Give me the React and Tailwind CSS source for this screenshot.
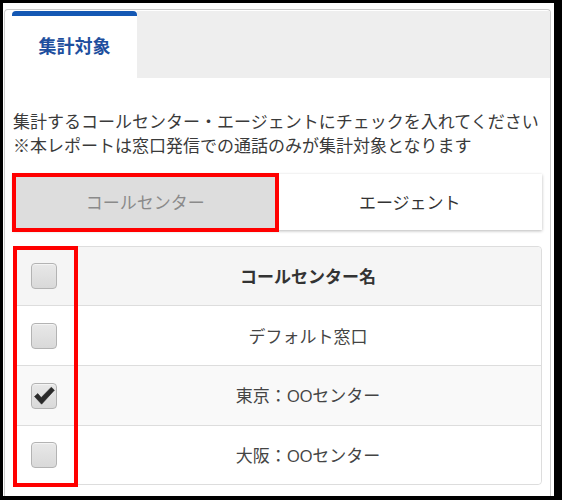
import { useState } from 'react'

const rows = [
  { id: 'default', name: ['デフォルト窓口'], checked: false },
  { id: 'tokyo', name: ['東京：', 'OO', 'センター'], checked: true },
  { id: 'osaka', name: ['大阪：', 'OO', 'センター'], checked: false },
]

function CheckBox({ checked }) {
  return (
    <div className="relative w-[26px] h-[26px] rounded-[4px] border border-[#b3b3b3] bg-linear-to-b from-[#e8e8e8] to-[#d9d9d9] shadow-[inset_0_1px_1px_rgba(255,255,255,0.6)]">
      {checked && (
        <svg className="absolute -left-[1px] -top-[1px]" width="26" height="26" viewBox="0 0 26 26">
          <path d="M3.5 13.5 L6.8 10.6 L10.2 14.6 L20.3 4.2 L23.4 7.2 L10.6 21.2 Z" fill="#2a2a2a" stroke="#2a2a2a" strokeWidth="0.6" strokeLinejoin="round" />
        </svg>
      )}
    </div>
  )
}

function Name({ parts }) {
  return (
    <span>
      {parts.map((p, i) =>
        p === 'OO' ? (
          <span key={i} className="font-['Open_Sans',sans-serif] tracking-[-0.5px]">{p}</span>
        ) : (
          <span key={i}>{p}</span>
        )
      )}
    </span>
  )
}

export default function App() {
  const [mode] = useState('center')

  return (
    <div className="w-[562px] h-[500px] bg-black pt-[3px] pl-[3px] pr-[8px] pb-[4px] font-['Noto_Sans_CJK_JP',sans-serif]">
      <div className="h-full bg-white pt-[6px] pl-[1px] pr-[3px] overflow-hidden">
        {/* Panel */}
        <div className="h-full border border-b-0 border-[#cccccc] rounded-t-[4px]">
          {/* Tabs */}
          <div className="flex pt-[1px] pl-[7px] h-[68px]">
            <div className="w-[125px] flex flex-col bg-white">
              <div className="h-[5px] bg-[#1458b4] rounded-t-[4px]" />
              <div className="flex-1 flex items-center justify-center pb-[4px] text-[18px] font-bold text-[#1e4f9e] leading-none">
                集計対象
              </div>
            </div>
            <div className="flex-1 bg-[#eeeeee]" />
          </div>

          {/* Body */}
          <div className="px-[8px] pt-[31px]">
            <p className="text-[17px] leading-[24px] text-[#3a3a3a] whitespace-nowrap">
              集計するコールセンター・エージェントにチェックを入れてください
              <br />
              ※本レポートは窓口発信での通話のみが集計対象となります
            </p>

            {/* Segment buttons */}
            <div className="relative mt-[17px] flex h-[56px] shadow-[0_1px_3px_rgba(0,0,0,0.28)]">
              <div className={`flex-1 flex items-center justify-center text-[17px] ${mode === 'center' ? 'bg-[#dddddd] text-[#8a8a8a]' : 'bg-white text-[#333]'}`}>
                コールセンター
              </div>
              <div className="flex-1 flex items-center justify-center text-[17px] bg-white text-[#333333]">
                エージェント
              </div>
              <div className="absolute -left-[1px] -top-[1px] w-[267px] h-[59px] border-4 border-[#ff0000] pointer-events-none" />
            </div>

            {/* Table */}
            <div className="relative mt-[16px] border border-[#dddddd] rounded-[4px]">
              <div className="flex h-[58px] bg-[#f5f5f5] rounded-t-[4px]">
                <div className="w-[61px] flex items-center justify-center border-r border-[#dddddd]">
                  <CheckBox checked={false} />
                </div>
                <div className="flex-1 flex items-center justify-center text-[17px] font-bold text-[#333333]">
                  コールセンター名
                </div>
              </div>
              {rows.map((row, i) => (
                <div
                  key={row.id}
                  className={`flex border-t border-[#dddddd] ${i % 2 === 1 ? 'bg-[#f9f9f9]' : 'bg-white'} ${i === rows.length - 1 ? 'rounded-b-[4px] h-[59px]' : 'h-[60px]'}`}
                >
                  <div className="w-[61px] flex items-center justify-center border-r border-[#eeeeee]">
                    <CheckBox checked={row.checked} />
                  </div>
                  <div className="flex-1 flex items-center justify-center text-[17px] text-[#444444]">
                    <Name parts={row.name} />
                  </div>
                </div>
              ))}
              <div className="absolute -left-[1px] -top-[1px] w-[65px] -bottom-[3px] border-4 border-[#ff0000] pointer-events-none" />
            </div>
          </div>
        </div>
      </div>
    </div>
  )
}
